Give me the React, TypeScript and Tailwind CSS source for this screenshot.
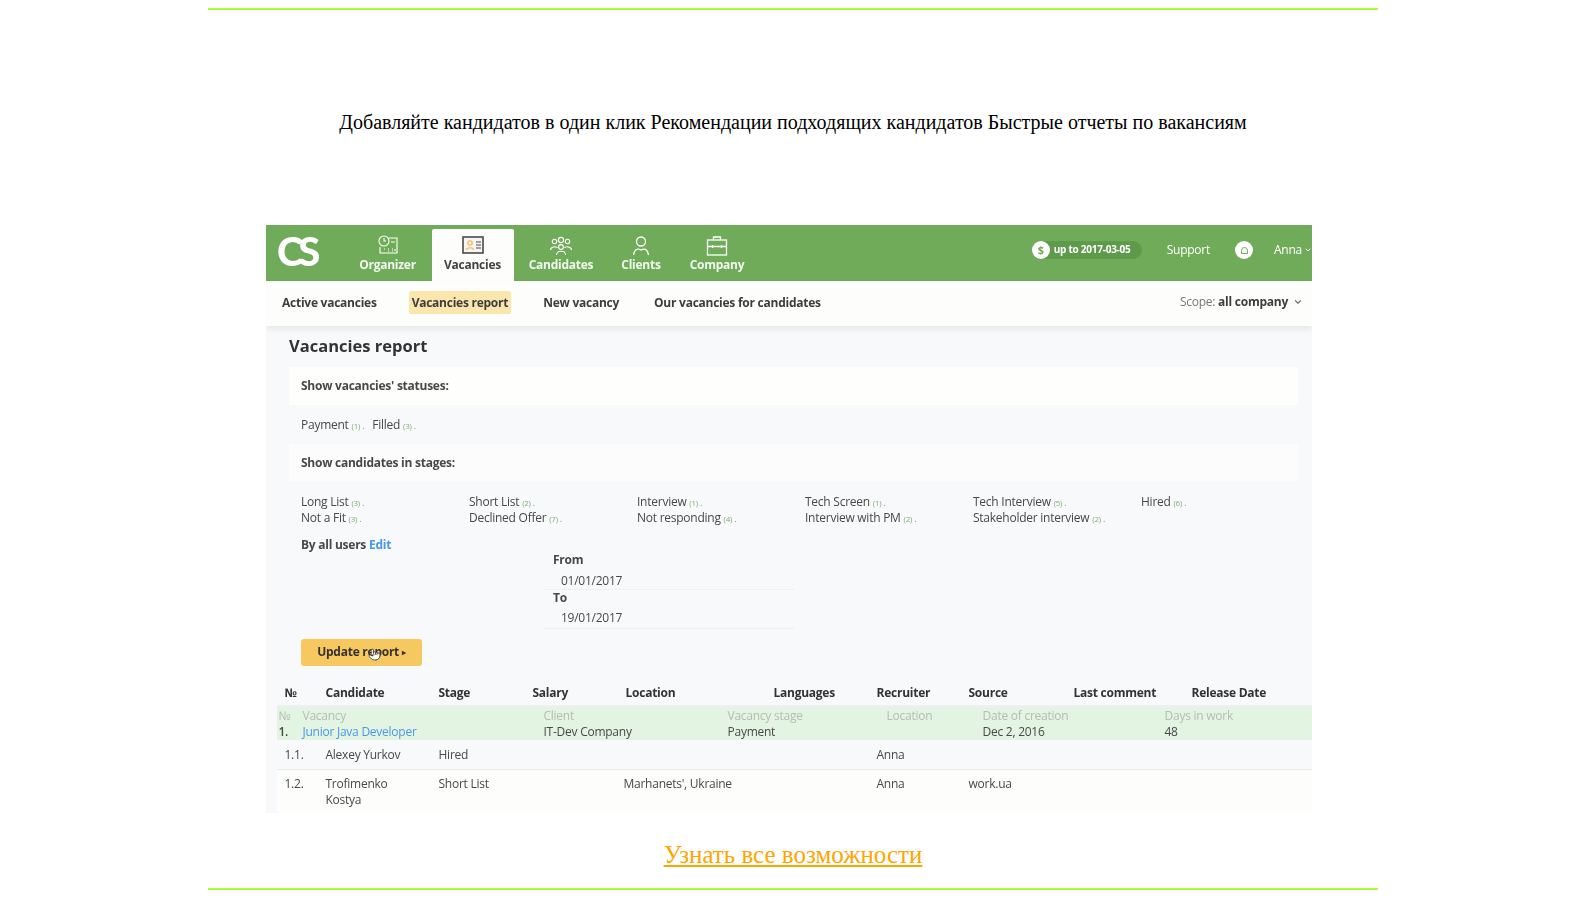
import { ChevronDown, Pointer } from "lucide-react";

const navItems = [
  { label: "Organizer", width: "w-[88px]", icon: "organizer" },
  { label: "Vacancies", width: "w-[82px]", icon: "vacancies", active: true },
  { label: "Candidates", width: "w-[95px]", icon: "candidates" },
  { label: "Clients", width: "w-[65px]", icon: "clients" },
  { label: "Company", width: "w-[87px]", icon: "company" },
];

const stageRows = [
  [
    ["Long List", 3],
    ["Short List", 2],
    ["Interview", 1],
    ["Tech Screen", 1],
    ["Tech Interview", 5],
    ["Hired", 6],
  ],
  [
    ["Not a Fit", 3],
    ["Declined Offer", 7],
    ["Not responding", 4],
    ["Interview with PM", 2],
    ["Stakeholder interview", 2],
  ],
];

const tableCols = "grid-cols-[41px_113px_94px_93px_148px_103px_92px_105px_118px_1fr]";
const bandCols = "grid-cols-[24px_241px_184px_159px_96px_182px_1fr]";

function NavIcon({ name, active }: { name: string; active?: boolean }) {
  const stroke = active ? "#4a4a4a" : "#ffffff";
  return (
    <svg width="26" height="22" viewBox="0 0 26 22" fill="none" stroke={stroke} strokeWidth="1.1">
      {name === "organizer" && (
        <>
          <circle cx="9" cy="6" r="5" />
          <path d="M9 3v3h2M14 3h8v15H5v-6M16 7h4M9 14h1M13 14h1M17 14h1M13 16h1M17 16h1M20 14v2" />
        </>
      )}
      {name === "vacancies" && (
        <>
          <rect x="3" y="2" width="20" height="16" fill="#f4f4f4" strokeWidth="1.6" />
          <circle cx="10" cy="8" r="2.2" stroke="#f2b544" />
          <path d="M6.5 15c0-3 7-3 7 0" stroke="#f2b544" />
          <path d="M16 7h5M16 10h5M16 13h5" />
        </>
      )}
      {name === "candidates" && (
        <>
          <circle cx="13" cy="5" r="2.6" />
          <circle cx="6.5" cy="6.5" r="2.2" />
          <circle cx="19.5" cy="6.5" r="2.2" />
          <circle cx="13" cy="12" r="2.4" />
          <path d="M8.5 20c0-5 9-5 9 0M2.5 15c0-3.5 6-4 7-2M23.5 15c0-3.5-6-4-7-2" />
        </>
      )}
      {name === "clients" && (
        <>
          <circle cx="13" cy="6.5" r="4.5" strokeWidth="1.3" />
          <path d="M5.5 20c1-6 4-7 7.5-5 3.5-2 6.500-1 7.500 5" strokeWidth="1.3" />
        </>
      )}
      {name === "company" && (
        <>
          <rect x="3.5" y="5" width="19" height="15" strokeWidth="1.3" />
          <path d="M9.500 5V2h7v3M3.500 11.500h19M8.500 10v3M17.500 10v3" strokeWidth="1.3" />
        </>
      )}
    </svg>
  );
}

function Stage({ name, count }: { name: string; count: number }) {
  return (
    <span>
      {name} <span className="text-[8px] text-[#7fae78]">({count})</span>
      <span className="text-[9px] text-[#8a8a8a]"> .</span>
    </span>
  );
}

function ProductShot() {
  return (
    <div className="ml-[58px] flex h-[588px] w-[1046px] flex-col overflow-hidden bg-[#f8f9fb] font-['Open_Sans',sans-serif] text-[12px] leading-[15.5px] tracking-[-0.25px] text-[#484848] blur-[0.5px]">
      <div className="flex h-14 shrink-0 bg-[#70ab59] text-white">
        <div className="flex w-[77.5px] items-center pb-[4px] pl-[11px] font-['Lato',sans-serif] text-[40px] leading-none font-black tracking-[-5px]">
          CS
        </div>
        <div className="flex items-end">
          {navItems.map((item) => (
            <div
              key={item.label}
              className={`${item.width} flex h-[52px] flex-col items-center rounded-t-[2px] pt-[6px] text-[12px] leading-[15px] font-bold ${
                item.active ? "bg-[#fdfdfb] text-[#444]" : "text-white/90"
              }`}
            >
              <NavIcon name={item.icon} active={item.active} />
              <span>{item.label}</span>
            </div>
          ))}
        </div>
        <div className="ml-auto flex items-center gap-[24px] pb-[6px]">
          <div className="mr-[1px] flex h-[18px] w-[110px] items-center gap-[4px] rounded-full bg-[#5f9a4c] text-[10px] font-bold whitespace-nowrap">
            <span className="flex size-[18px] items-center justify-center rounded-full bg-white text-[11px] font-bold text-[#70ab59]">
              $
            </span>
            up to 2017-03-05
          </div>
          <span className="mr-[1px] text-[12px]">Support</span>
          <div className="flex items-center gap-[21px]">
            <span className="flex size-[18px] items-center justify-center rounded-full bg-white">
              <span className="size-[7px] rounded-t-full border border-[#70ab59]" />
            </span>
            <span className="flex w-[38px] items-center whitespace-nowrap">
              Anna <ChevronDown size={8} strokeWidth={3} className="ml-[2px]" />
            </span>
          </div>
        </div>
      </div>

      <div className="z-10 flex h-[45px] shrink-0 items-center bg-[#fdfdfb] pr-[9px] pb-[2px] pl-[16px] font-bold text-[#3d3d3d] shadow-[0_3px_6px_rgba(0,0,0,0.08)]">
        <span>Active vacancies</span>
        <span className="ml-[32px] rounded-[2px] bg-[#fbe6ae] px-[3px] py-[4px]">Vacancies report</span>
        <span className="ml-[32px]">New vacancy</span>
        <span className="ml-[35px]">Our vacancies for candidates</span>
        <span className="ml-auto flex items-center pb-[2px] font-normal text-[#777]">
          Scope:&nbsp;<b className="text-[#3d3d3d]">all company</b>
          <ChevronDown size={10} strokeWidth={3} className="ml-[5px]" />
        </span>
      </div>

      <div className="flex flex-1 flex-col">
        <h1 className="mt-[8px] ml-[23px] text-[16.5px] leading-[24px] font-bold tracking-normal text-[#333]">
          Vacancies report
        </h1>
        <div className="mt-[9px] ml-[23px] flex h-[38px] w-[1009px] items-center bg-[#fefefd] pl-[12px] font-bold">
          Show vacancies' statuses:
        </div>
        <div className="flex h-[39px] items-center gap-[8px] pt-[1px] pl-[35px]">
          <Stage name="Payment" count={1} />
          <Stage name="Filled" count={3} />
        </div>
        <div className="ml-[23px] flex h-[37px] w-[1009px] items-center bg-[#fbfcfb] pl-[12px] font-bold">
          Show candidates in stages:
        </div>
        <div className="mt-[13px] pl-[35px] leading-[15px]">
          {stageRows.map((row, i) => (
            <div key={i} className="grid grid-cols-[repeat(6,168px)]">
              {row.map(([name, count]) => (
                <Stage key={name as string} name={name as string} count={count as number} />
              ))}
            </div>
          ))}
        </div>
        <div className="mt-[11px] h-[15px] pl-[35px] font-bold">
          By all users <span className="text-[#4a97e8]">Edit</span>
        </div>
        <div className="ml-[278px] w-[250px]">
          <div className="h-4 pl-[9px] leading-4 font-bold">From</div>
          <div className="h-[22px] border-b border-[#eef0f2] pt-[2px] pl-[17px] leading-[21px]">01/01/2017</div>
          <div className="h-4 pl-[9px] leading-4 font-bold">To</div>
          <div className="h-[23px] border-b border-[#eef0f2] pl-[17px] leading-[24px]">19/01/2017</div>
        </div>
        <div className="relative mt-[10px] ml-[35px] flex h-[27px] w-[121px] items-center justify-center rounded-[3px] bg-[#f6c85f] pb-[1px] font-bold text-[#333]">
          Update report <span className="ml-[3px] text-[8px]">▸</span>
          <Pointer size={13} fill="#ffffff" strokeWidth={1.5} className="absolute top-[9px] left-[67px] text-[#333]" />
        </div>

        <div className="ml-[10.5px] flex-1">
          <div className={`mt-[16px] grid h-[25px] items-center border-b-2 border-[#eef0f0] pb-[1px] pl-2 font-bold text-[#333] ${tableCols}`}>
            {["№", "Candidate", "Stage", "Salary", "Location", "Languages", "Recruiter", "Source", "Last comment", "Release Date"].map((h) => (
              <span key={h}>{h}</span>
            ))}
          </div>
          <div className={`grid h-[33px] content-center bg-[#e3f4e2] pl-[2px] ${bandCols}`}>
            {["№", "Vacancy", "Client", "Vacancy stage", "Location", "Date of creation", "Days in work"].map((h) => (
              <span key={h} className="text-[#b4bdb4]">{h}</span>
            ))}
            <span className="font-semibold">1.</span>
            <span className="text-[#4a97e8]">Junior Java Developer</span>
            <span>IT-Dev Company</span>
            <span>Payment</span>
            <span />
            <span>Dec 2, 2016</span>
            <span>48</span>
          </div>
          <div className={`grid h-[30px] items-center border-b border-[#e9eaec] pl-[8px] ${tableCols}`}>
            <span>1.1.</span>
            <span>Alexey Yurkov</span>
            <span>Hired</span>
            <span />
            <span />
            <span />
            <span>Anna</span>
          </div>
          <div className={`grid h-[43px] bg-[#fdfdfc] pt-[6px] pl-[8px] ${tableCols}`}>
            <span>1.2.</span>
            <span>
              Trofimenko
              <br />
              Kostya
            </span>
            <span>Short List</span>
            <span />
            <span className="-ml-[2px]">Marhanets', Ukraine</span>
            <span />
            <span>Anna</span>
            <span>work.ua</span>
          </div>
        </div>
      </div>
    </div>
  );
}

export default function App() {
  return (
    <main className="ml-[208px] w-[1170px] bg-white pt-2 font-['Liberation_Serif',serif] text-black">
      <div className="border-t-2 border-[#adff2f]" />
      <p className="mt-[98px] text-center text-[20px] leading-7">
        Добавляйте кандидатов в один клик Рекомендации подходящих кандидатов Быстрые отчеты по вакансиям
      </p>
      <div className="mt-[89px]">
        <ProductShot />
      </div>
      <p className="mt-[26px] text-center text-[25px] leading-8">
        <a href="#" className="text-[#ffa500] underline">
          Узнать все возможности
        </a>
      </p>
      <div className="mt-[17px] border-t-2 border-[#adff2f]" />
    </main>
  );
}
